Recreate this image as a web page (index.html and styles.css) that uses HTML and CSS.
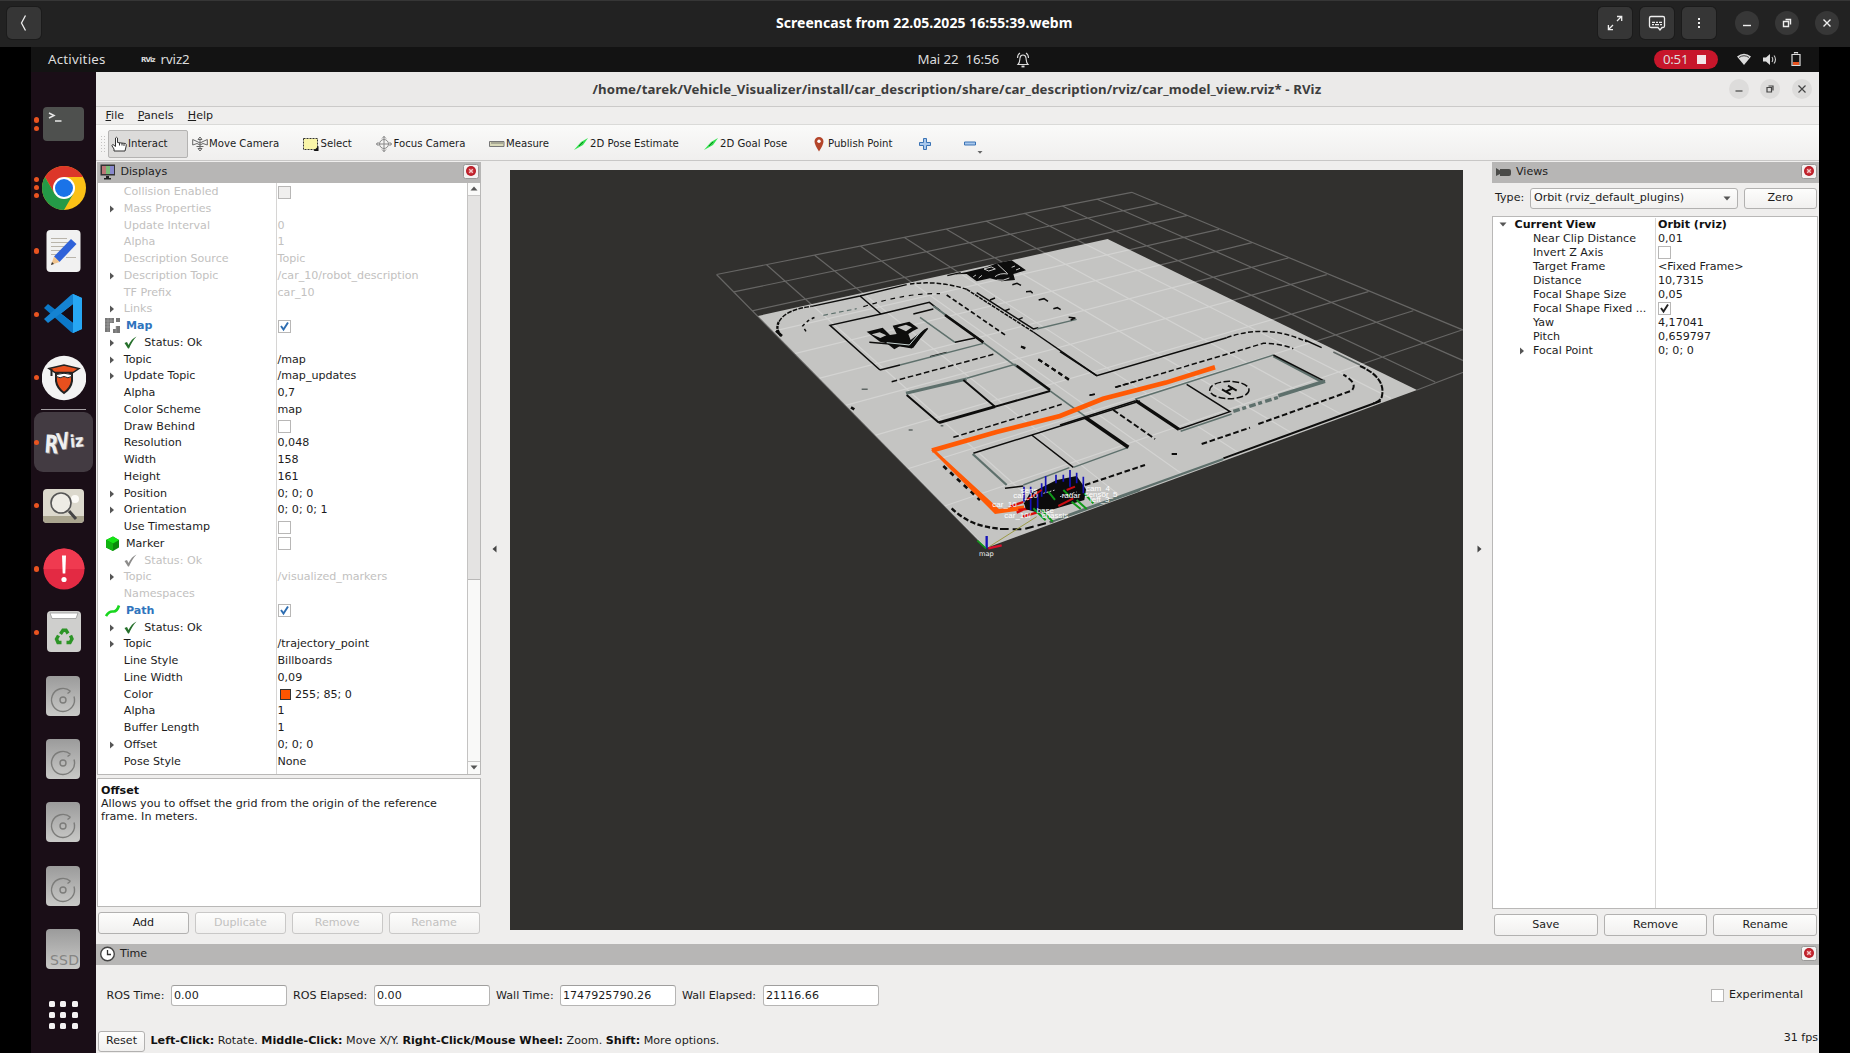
FILE: index.html
```html
<!DOCTYPE html>
<html lang="en">
<head>
<meta charset="utf-8">
<title>Screencast from 22.05.2025 16:55:39.webm</title>
<link rel="stylesheet" href="styles.css">
</head>
<body>
<svg class="defs" width="0" height="0">
  <defs>
    <linearGradient id="gDisk" x1="0" y1="0" x2="0" y2="1"><stop offset="0" stop-color="#9b9b9b"/><stop offset="1" stop-color="#c9c9c7"/></linearGradient>
    <radialGradient id="gRed"><stop offset="0" stop-color="#e04a50"/><stop offset="1" stop-color="#b3141f"/></radialGradient>
    <symbol id="arrow" viewBox="0 0 6 8"><path d="M1 0.5L5 4L1 7.5Z" fill="#555"/></symbol>
    <symbol id="down" viewBox="0 0 8 5"><path d="M0.5 0.5H7.5L4 4.5Z" fill="#555"/></symbol>
    <symbol id="tick" viewBox="0 0 13 13"><path d="M.5 7L3 6L4.500 9C6.500 5 9 2 12.500 0.5C9 4 7 8 5 12.500H4Z" fill="currentColor"/></symbol>
    <symbol id="check" viewBox="0 0 11 11"><path d="M2 5L4.500 8.500L9 1.500" fill="none" stroke="currentColor" stroke-width="1.9"/></symbol>
    <symbol id="close" viewBox="0 0 16 15"><rect x=".5" y=".5" width="15" height="14" rx="2" fill="#f4f3f2" stroke="#9a9998"/><circle cx="8" cy="7" r="5" fill="url(#gRed)"/><path d="M6.200 5.200l3.600 3.600M9.800 5.200L6.200 8.800" stroke="#f4c8c8" stroke-width="1.3"/></symbol>
    <symbol id="disk" viewBox="0 0 36 42"><rect x="1" y="1" width="34" height="40" rx="4" fill="url(#gDisk)"/><path d="M25.500 16.200A11.500 11.500 0 1 0 29 21.500M25.500 16.200L22.500 18.500" fill="none" stroke="#7c7c7a" stroke-width="1.4"/><circle cx="18" cy="25" r="3" fill="none" stroke="#7c7c7a" stroke-width="1.4"/></symbol>
    <symbol id="pose" viewBox="0 0 16 14"><path d="M1 13L8 5L15 1L10 8Z" fill="#2fe04b"/><path d="M6 9L10 5" stroke="#137a20"/></symbol>
  </defs>
</svg>
<div class="player">
  <header class="player-bar">
    <button class="pbtn"><svg width="34" height="32"><path d="M18.500 8.500L14.500 16L18.500 23.500" fill="none" stroke="#eee" stroke-width="1.3"/></svg></button>
    <h1 class="player-title">Screencast from 22.05.2025 16:55:39.webm</h1>
    <div class="player-actions">
      <button class="pbtn"><svg width="34" height="32" fill="none" stroke="#eee" stroke-width="1.3"><path d="M19 14L23.500 9.500M19 9.500H23.700V14M15 18L10.500 22.500M10.400 18V22.700H15"/></svg></button>
      <button class="pbtn"><svg width="34" height="32" fill="none" stroke="#eee" stroke-width="1.3"><path d="M11 9.500H23Q24.500 9.500 24.500 11V19Q24.500 20.500 23 20.500H22L20 23L18 20.500H11Q9.500 20.500 9.500 19V11Q9.500 9.500 11 9.500Z"/><path d="M12 15.300H15M16 15.300H18M19 15.300H22M12 17.700H14M15 17.700H19M20 17.700H22"/></svg></button>
      <button class="pbtn"><svg width="34" height="32" fill="#eee"><path d="M16 11h2v2h-2zM16 15h2v2h-2zM16 19h2v2h-2z"/></svg></button>
    </div>
    <div class="player-window">
      <svg width="24" height="24"><circle cx="12" cy="12" r="12"/><path d="M8 14.500H16"/></svg>
      <svg width="24" height="24"><circle cx="12" cy="12" r="12"/><path d="M8.500 10.500h5v5h-5zM10.500 8.500h5v5"/></svg>
      <svg width="24" height="24"><circle cx="12" cy="12" r="12"/><path d="M8.500 8.500l7 7M15.500 8.500l-7 7"/></svg>
    </div>
  </header>

  <div class="desktop">
    <div class="topbar">
      <div class="top-left"><span class="activities">Activities</span><b class="mini">RViz</b><span class="appname">rviz2</span></div>
      <div class="top-mid"><span class="clock">Mai 22&nbsp; 16:56</span>
        <svg width="14" height="16" fill="none" stroke="#ddd" stroke-width="1.1"><path d="M2 12.500C4 10.500 3.700 8 4 6Q4.300 3 7 3Q9.700 3 10 6C10.300 8 10 10.500 12 12.500ZM1.500 6Q1.500 2.500 4 1M12.500 6Q12.500 2.500 10 1"/><path d="M5.500 14.500h3" stroke-width="1.800"/></svg></div>
      <div class="top-right">
        <span class="rec">0:51<i></i></span>
        <svg class="wifi" width="14" height="13"><path d="M0 3.500Q7 -2 14 3.500L7 12Z" fill="#ddd"/><path d="M2 4.500Q7 1 12 4.500" fill="none" stroke="#131313" stroke-width=".8"/></svg>
        <svg class="vol" width="14" height="13"><path d="M0 4.500H3L7 1V12L3 8.500H0Z" fill="#ddd"/><path d="M9 4Q10.500 6.500 9 9M11 2.500Q14 6.500 11 10.500" fill="none" stroke="#ccc" stroke-width="1.1"/></svg>
        <svg width="10" height="15"><path d="M1 2.500H9V13.500H1ZM3.500 1.500V.700H6.500V1.500" fill="none" stroke="#ddd" stroke-width="1.2"/><path d="M2 10h6v3H2z" fill="#e95420"/></svg>
      </div>
    </div>

    <div class="workspace">
      <nav class="launcher">
        <div class="slot"><span class="dots"><i></i><i></i></span><svg width="42" height="46"><rect x="1" y="6" width="41" height="34" rx="4" fill="#4e504e"/><path d="M7 12l5 2.500-5 2.500M13 20h6.500" fill="none" stroke="#e8e8e8" stroke-width="1.500"/></svg></div>
        <div class="slot"><span class="dots"><i></i><i></i><i></i></span><svg width="44" height="46" viewBox="-22 -23 44 46"><circle r="22" fill="#fbc116"/><path d="M0 0L-19.050 -11A22 22 0 0 1 19.050 -11H0Z" fill="#dc3629"/><path d="M-19 -11L-9.500 5.500L0 0L0 -11Z" fill="#dc3629"/><path d="M-19.050 -11A22 22 0 0 0 0 22L9.500 5.500H0L-9.500 5.500Z" fill="#249a47"/><circle r="11" fill="#fff"/><circle r="9" fill="#1a73e8"/></svg></div>
        <div class="slot"><span class="dots"><i></i></span><svg width="44" height="46"><rect x="4.500" y="2" width="34" height="42" rx="4" fill="#f1f1f1"/><path d="M9 10.500H25M9 14.500H26M9 18.500H22M9 22.500H20M9 26.500H17M24 29.500H34" stroke="#b9b4aa"/><path d="M29 11L34.500 16L17.500 34L12 28.500Z" fill="#2f62d9"/><path d="M12 28.500L17.500 34L9 37Z" fill="#f0c48e"/><path d="M9 37l1-3 2 2z" fill="#333"/></svg></div>
        <div class="slot"><span class="dots"><i></i></span><svg width="44" height="46"><path d="M31 3L40 7V38L31 42L12 23Z" fill="#1f9cf0"/><path d="M31 13V32L19 22.500Z" fill="#170b14"/><path d="M2 17L6 13L31 32V42L29 41Z" fill="#0b78c8"/><path d="M2 28L6 32L31 13V3L29 4Z" fill="#1583d2"/><path d="M31 3L40 7V38L31 42Z" fill="#27a7f4"/></svg></div>
        <div class="slot"><span class="dots"><i></i></span><svg width="44" height="46"><circle cx="22" cy="23" r="22.300" fill="#f3f3f3"/><path d="M14 18V26Q15 33 22 38Q29 33 30 26V18Z" fill="#e8501e" stroke="#222" stroke-width="2"/><path d="M7 13.500L22 10L37 13.500L31 17.500H13Z" fill="#e8501e" stroke="#222" stroke-width="1.500"/><path d="M14.500 19.500Q22 17 29.500 19.500V21.500Q26 24 22 21.500Q18 24 14.500 21.500Z" fill="#fff" stroke="#222"/><path d="M9.500 14V21" stroke="#222" stroke-width="2"/></svg></div>
        <hr>
        <div class="slot active"><span class="dots"><i></i></span><svg width="44" height="46"><g font-family="DejaVu Sans" font-weight="bold"><g fill="#8d888c"><text transform="translate(3 34.500) rotate(4) scale(.72 1)" font-size="25">R</text><text transform="translate(17 31.500) rotate(-8) scale(.7 1)" font-size="23">V</text><text transform="translate(29.500 29) rotate(-5) scale(.86 1)" font-size="17">iz</text></g><g fill="#efefef"><text transform="translate(2 33.500) rotate(4) scale(.72 1)" font-size="25">R</text><text transform="translate(16 31) rotate(-8) scale(.7 1)" font-size="23">V</text><text transform="translate(28.500 28.500) rotate(-5) scale(.86 1)" font-size="17">iz</text></g></g></svg></div>
        <div class="slot"><span class="dots"><i></i></span><svg width="44" height="46"><rect x="1" y="6" width="41" height="34" rx="4" fill="#dcd9cd"/><path d="M1 33H42V36Q42 40 38 40H5Q1 40 1 36Z" fill="#aaa58f"/><circle cx="33" cy="16" r="4" fill="#fbfaf6"/><circle cx="19" cy="20" r="10" fill="#eeece5" stroke="#555" stroke-width="1.600"/><path d="M27 28L34 36" stroke="#444" stroke-width="3"/></svg></div>
        <div class="slot"><span class="dots"><i></i></span><svg width="44" height="46"><circle cx="22" cy="23" r="20.500" fill="#e32a43"/><path d="M1.500 23a20.500 20.500 0 0 1 41 0z" fill="#f03a50"/><path d="M20 9.500h4l-.7 18h-2.600z" fill="#fff"/><circle cx="22" cy="33.500" r="2.600" fill="#fff"/></svg></div>
        <div class="slot"><span class="dots"><i></i></span><svg width="44" height="46"><rect x="5" y="2" width="34" height="41" rx="4" fill="#cfcfcd"/><path d="M8 4H36L34 9.500H10Z" fill="#fff" stroke="#999" stroke-width=".800"/><g fill="none" stroke="#2c9426" stroke-width="3.400"><path d="M18.500 25L21 21.200H24L26 24.500M28.500 26.500L30 30L28 33.500H24.500M19.500 33.500H16L14.500 30L16.500 26.500"/></g></svg></div>
        <div class="slot"><svg class="disk" width="36" height="42"><use href="#disk"/></svg></div>
        <div class="slot"><svg class="disk" width="36" height="42"><use href="#disk"/></svg></div>
        <div class="slot"><svg class="disk" width="36" height="42"><use href="#disk"/></svg></div>
        <div class="slot"><svg class="disk" width="36" height="42"><use href="#disk"/></svg></div>
        <div class="slot"><svg class="disk" width="36" height="42"><rect x="1" y="1" width="34" height="40" rx="4" fill="url(#gDisk)"/><text x="5" y="37" font-family="DejaVu Sans" font-size="14" fill="#858583" textLength="29">SSD</text></svg></div>
        <div class="apps"><i></i><i></i><i></i><i></i><i></i><i></i><i></i><i></i><i></i></div>
      </nav>

      <main class="rviz">
        <div class="titlebar">
          <span class="wtitle">/home/tarek/Vehicle_Visualizer/install/car_description/share/car_description/rviz/car_model_view.rviz* - RViz</span>
          <div class="wbtns">
            <svg width="20" height="20"><circle cx="10" cy="10" r="10"/><path d="M6.500 12H13.500"/></svg>
            <svg width="20" height="20"><circle cx="10" cy="10" r="10"/><path d="M7 8.500h4.500v4.500H7zM8.500 7h4.500v4.500"/></svg>
            <svg width="20" height="20"><circle cx="10" cy="10" r="10"/><path d="M6.500 6.500l7 7M13.500 6.500l-7 7"/></svg>
          </div>
        </div>
        <div class="menubar"><span class="m1"><u>F</u>ile</span><span class="m2"><u>P</u>anels</span><span><u>H</u>elp</span></div>
        <div class="toolbar">
          <svg class="grip" width="4" height="16"><path d="M.500 0V16M3.500 0V16" stroke="#c4c3c2" stroke-dasharray="1 2"/></svg>
          <div class="tool on t1"><svg width="16" height="16"><path d="M3 15V13L.8 9.500L2 8.500L4.500 10.500V2Q5.500 .500 6.500 2V6.500L14.500 7.500Q15.500 8 15.200 10L14 15Z" fill="#fff" stroke="#333"/><path d="M8.500 7v2.500M11 7v2.500M13 8v2" stroke="#333"/></svg>Interact</div>
          <div class="tool t2"><svg width="16" height="16" fill="none" stroke="#666"><path d="M8 1L10 3.500H6ZM8 15L10 12.500H6ZM.700 3.500L5 5.500L8 7L11 5.500L15.300 3.500V9L11 7.500L8 9L5 7.500L.700 9ZM8 3.500V12.500M4.500 10.500h7"/></svg>Move Camera</div>
          <div class="tool t3"><svg width="16" height="16"><path d="M.500 2.500h14v11H.500z" fill="#f9f5a8" stroke="#333" stroke-dasharray="2 1"/><path d="M15.500 10v5h-5z" fill="#111"/></svg>Select</div>
          <div class="tool t4"><svg width="16" height="16" fill="none" stroke="#888"><circle cx="8" cy="8" r="4.500"/><path d="M8 0v16M0 8h16M6 2.500L8 .500l2 2M6 13.500l2 2 2-2M2.500 6L.500 8l2 2M13.500 6l2 2-2 2"/></svg>Focus Camera</div>
          <div class="tool t5"><svg width="16" height="16"><path d="M.500 5.500h14.500v5H.500z" fill="#d8d8b8" stroke="#777"/><path d="M3 6v2M5 6v2M7 6v2M9 6v2M11 6v2M13 6v2" stroke="#555" stroke-width=".700"/></svg>Measure</div>
          <div class="tool t6"><svg width="16" height="14"><use href="#pose"/></svg>2D Pose Estimate</div>
          <div class="tool t7"><svg width="16" height="14"><use href="#pose"/></svg>2D Goal Pose</div>
          <div class="tool t8"><svg width="16" height="16"><path d="M8 15.500Q3.500 8.500 3.500 5.500A4.500 4.500 0 0 1 12.500 5.500Q12.500 8.500 8 15.500Z" fill="#b4452a"/><circle cx="8" cy="5.300" r="1.700" fill="#fff"/></svg>Publish Point</div>
          <svg class="plus" width="12" height="12"><path d="M4.500 .500h3v4h4v3h-4v4h-3v-4h-4v-3h4z" fill="#a9c8ec" stroke="#3a73b5"/></svg>
          <svg class="minus" width="20" height="20"><path d="M.500 8h11v3H.500z" fill="#a9c8ec" stroke="#3a73b5"/><path d="M13.500 17h5l-2.500 2.800z" fill="#666"/></svg>
        </div>

        <div class="middle">
          <section class="displays">
            <div class="dockhead"><svg width="16" height="16"><path d="M.500 .500h14.500v11H.500z" fill="#333"/><path d="M2 2h4v8H2z" fill="#b77"/><path d="M6 2h4v8H6z" fill="#7b7"/><path d="M10 2h4v8h-4z" fill="#88c"/><path d="M6 12h3v2h2v1.500H4V14h2z" fill="#222"/></svg><span>Displays</span><svg class="x" width="16" height="15"><use href="#close"/></svg></div>
            <div class="treebox">
              <div class="tree">
                <div class="row off"><div class="n">Collision Enabled</div><div class="v"><i class="cb dis"></i></div></div>
                <div class="row off"><div class="n"><svg class="ar"><use href="#arrow"/></svg>Mass Properties</div><div class="v"></div></div>
                <div class="row off"><div class="n">Update Interval</div><div class="v">0</div></div>
                <div class="row off"><div class="n">Alpha</div><div class="v">1</div></div>
                <div class="row off"><div class="n">Description Source</div><div class="v">Topic</div></div>
                <div class="row off"><div class="n"><svg class="ar"><use href="#arrow"/></svg>Description Topic</div><div class="v">/car_10/robot_description</div></div>
                <div class="row off"><div class="n">TF Prefix</div><div class="v">car_10</div></div>
                <div class="row off"><div class="n"><svg class="ar"><use href="#arrow"/></svg>Links</div><div class="v"></div></div>
                <div class="row"><div class="n disp"><svg width="16" height="16"><path d="M0 0h9v5H5v9H0z" fill="#777"/><path d="M11 0h4v4h-4zM8 11h3v-3h4v7H8z" fill="#777"/><path d="M0 3h9M0 6h5M0 9h5M3 0v14M6 0v5M11 8v7" stroke="#aaa" stroke-width=".600"/></svg><b>Map</b></div><div class="v"><i class="cb blue"><svg width="11" height="11"><use href="#check"/></svg></i></div></div>
                <div class="row"><div class="n"><svg class="ar"><use href="#arrow"/></svg><svg class="ok"><use href="#tick"/></svg>Status: Ok</div><div class="v"></div></div>
                <div class="row"><div class="n"><svg class="ar"><use href="#arrow"/></svg>Topic</div><div class="v">/map</div></div>
                <div class="row"><div class="n"><svg class="ar"><use href="#arrow"/></svg>Update Topic</div><div class="v">/map_updates</div></div>
                <div class="row"><div class="n">Alpha</div><div class="v">0,7</div></div>
                <div class="row"><div class="n">Color Scheme</div><div class="v">map</div></div>
                <div class="row"><div class="n">Draw Behind</div><div class="v"><i class="cb"></i></div></div>
                <div class="row"><div class="n">Resolution</div><div class="v">0,048</div></div>
                <div class="row"><div class="n">Width</div><div class="v">158</div></div>
                <div class="row"><div class="n">Height</div><div class="v">161</div></div>
                <div class="row"><div class="n"><svg class="ar"><use href="#arrow"/></svg>Position</div><div class="v">0; 0; 0</div></div>
                <div class="row"><div class="n"><svg class="ar"><use href="#arrow"/></svg>Orientation</div><div class="v">0; 0; 0; 1</div></div>
                <div class="row"><div class="n">Use Timestamp</div><div class="v"><i class="cb"></i></div></div>
                <div class="row"><div class="n disp"><svg width="16" height="16"><path d="M1 4L8 .500L14 4V11.500L8 15L1 11.500Z" fill="#0a8a0a"/><path d="M1 4L8 .500L14 4L8 7.500Z" fill="#15e515"/><path d="M1 4L8 7.500V15L1 11.500Z" fill="#10b410"/></svg><span>Marker</span></div><div class="v"><i class="cb"></i></div></div>
                <div class="row off"><div class="n"><svg class="ok"><use href="#tick"/></svg>Status: Ok</div><div class="v"></div></div>
                <div class="row off"><div class="n"><svg class="ar"><use href="#arrow"/></svg>Topic</div><div class="v">/visualized_markers</div></div>
                <div class="row off"><div class="n">Namespaces</div><div class="v"></div></div>
                <div class="row"><div class="n disp"><svg width="16" height="16"><path d="M1 13Q4 8 8 8.500T14 2.500" fill="none" stroke="#19d61f" stroke-width="2.600"/></svg><b>Path</b></div><div class="v"><i class="cb blue"><svg width="11" height="11"><use href="#check"/></svg></i></div></div>
                <div class="row"><div class="n"><svg class="ar"><use href="#arrow"/></svg><svg class="ok"><use href="#tick"/></svg>Status: Ok</div><div class="v"></div></div>
                <div class="row"><div class="n"><svg class="ar"><use href="#arrow"/></svg>Topic</div><div class="v">/trajectory_point</div></div>
                <div class="row"><div class="n">Line Style</div><div class="v">Billboards</div></div>
                <div class="row"><div class="n">Line Width</div><div class="v">0,09</div></div>
                <div class="row"><div class="n">Color</div><div class="v"><i class="swatch"></i>255; 85; 0</div></div>
                <div class="row"><div class="n">Alpha</div><div class="v">1</div></div>
                <div class="row"><div class="n">Buffer Length</div><div class="v">1</div></div>
                <div class="row"><div class="n"><svg class="ar"><use href="#arrow"/></svg>Offset</div><div class="v">0; 0; 0</div></div>
                <div class="row"><div class="n">Pose Style</div><div class="v">None</div></div>
              </div>
              <div class="scroll"><div class="sb up"><svg width="8" height="5"><use href="#down"/></svg></div><div class="trough"></div><div class="thumb"></div><div class="sb"><svg width="8" height="5"><use href="#down"/></svg></div></div>
            </div>
            <div class="help"><b>Offset</b><br>Allows you to offset the grid from the origin of the reference<br>frame. In meters.</div>
            <div class="btnrow"><button class="qb">Add</button><button class="qb" disabled>Duplicate</button><button class="qb" disabled>Remove</button><button class="qb" disabled>Rename</button></div>
          </section>

          <div class="split"><svg width="5" height="8"><path d="M4.500 .500V7.500L.500 4Z" fill="#444"/></svg></div>

          <svg class="view" width="953" height="760" viewBox="510 170 953 760">
            <rect x="510" y="170" width="953" height="760" fill="#31302e"/>
            <path d="M986 548L1417 390L1107.600 239L758 316Z" fill="#c4c4c2"/>
            <path fill="none" stroke="#fff" stroke-opacity=".26" stroke-width="1.200" d="M986 548L716.500 274.500M1056.700 521.900L766.600 264.700M1122.400 497.600L814.300 255M1183.600 475L860.300 246M1240.600 453.900L904 237.300M1294 434.200L946 229M1344 415.700L986 221M1391 398.400L1024.300 213.300M1435.200 382L1061.700 205.700M1476.800 366.600L1096.700 199M1516 352L1131.700 192.300M1417 390L1516 352M944.600 506L1462.600 329.800M907.800 468.700L1413.300 310.700M875 435.300L1368.300 291.700M845.500 405.400L1326.700 274.700M818.800 378.300L1288.300 258M794.600 353.700L1252 242.700M772.500 331.300L1219 229.300M752.300 310.800L1186.700 215.700M733.700 291.900L1158.300 203.300M716.500 274.500L1131.700 192.300"/>

            <g transform="translate(700 180) scale(.33333)" fill="none" stroke="#0d0d0c" stroke-width="4.500">
              <path d="M243 468Q225 445 237 425" stroke-width="7" stroke-dasharray="9 3"/>
              <path d="M237 425C250 400 285 385 335 379" stroke-dasharray="14 4"/>
              <path d="M335 379L480 348L620 314" stroke-width="4"/>
              <path d="M630 312C680 305 740 308 800 328" stroke-dasharray="14 6"/>
              <path d="M480 348L543 402M543 402L390 436L540 570M543 402L688 367L720 392"/>
              <path d="M540 570L600 555M690 530L740 517" stroke-width="4"/>
              <path d="M600 555L850 490" stroke="#5e706c" stroke-width="4"/>
              <path d="M700 378L850 487" stroke="#5e706c" stroke-width="6"/>
              <path d="M735 405L850 487" stroke-width="8"/>
              <path d="M640 402L700 387M765 487L825 474"/>
              <path d="M660 412L765 487" stroke="#5e706c"/>
              <path d="M318 454L308 438Q325 418 350 410" stroke-dasharray="9 9"/>
              <path d="M370 406L470 386" stroke="#5e706c" stroke-dasharray="14 10" stroke-width="3.500"/>
              <path d="M490 380Q620 338 720 341" stroke-dasharray="14 14" stroke-width="3.500"/>
              <path d="M740 345L920 468" stroke-dasharray="14 8" stroke-width="5"/>
              <path d="M963 499l12 7M1015 538L1110 602" stroke-dasharray="14 10" stroke-width="6"/>
              <path d="M800 328L1000 456" stroke-dasharray="12 3"/>
              <path d="M1000 456L1190 587"/>
              <path d="M830 338L1000 447l15-4M870 360l15-6M915 392l14-5M955 418l13-5"/>
              <path d="M1010 447L1130 418" stroke="#5e706c" stroke-width="4"/>
              <path d="M937 314l14-4 12 6M978 335l14-1 6 6M1016 360l16-4 12 8M1060 386l12-3 10 6M1106 412l20 2-14 6"/>
              <path d="M742 287l40-9" stroke-width="4"/>
              <path d="M765 283L800 276L860 262L890 250L935 241L978 271L940 282L945 300L905 304L870 295L830 304L800 282Z" fill="#0d0d0c" stroke="none"/>
              <path d="M852 267l22-6 12 6-20 6zM885 290q15-12 38-8M890 300q20 4 38-6M820 290l8-5M836 294l10-8M893 253l30 28M935 262l10-4M948 270l12-5" stroke="#c9c9c7" stroke-width="3"/>
              <path d="M500 455L548 443L570 465L590 462L578 437L628 425L655 445L640 452L625 462L632 480L675 447L682 445L640 503L600 498L583 508L560 490L540 485Z" fill="#0d0d0c" stroke="none"/>
              <path d="M515 463l24-6 20 9-18 8zM592 442l26-8 18 8-18 12z" fill="#c4c4c2" stroke="none"/>
              <path d="M508 487L570 492L635 503L683 445"/>
              <path d="M560 488L628 495L665 452" stroke="#c9d6d4" stroke-width="3"/>
            </g>

            <g transform="translate(740 330) scale(.33333)" fill="none" stroke="#0d0d0c" stroke-width="4.500">
              <path d="M730 38L1040 262" stroke="#5e706c" stroke-width="5"/>
              <path d="M108 2l18 16M333 232l10 6" stroke-width="8"/>
              <path d="M365 178h18M506 300h12M602 287h8" stroke="#5f6664"/>
              <path d="M455 155L760 73M640 322L965 223" stroke-dasharray="17 8"/>
              <path d="M498 190L680 147" stroke="#5e706c" stroke-width="9"/>
              <path d="M680 145L825 103L930 180" stroke="#5e706c"/>
              <path d="M500 195L597 278M670 150L765 230L930 183" stroke-width="6"/>
              <path d="M597 278L765 230" stroke-width="9"/>
              <path d="M830 107L930 180" stroke-width="7"/>
              <path d="M844 50l12 4M895 88L990 150" stroke-width="6" stroke-dasharray="14 10"/>
              <path d="M1048 196l16-3M1128 172L1200 150" stroke-dasharray="16 8"/>
              <path d="M700 370L1200 213M875 315L1000 412"/>
              <path d="M698 372L800 465" stroke="#5e706c" stroke-width="7"/>
              <path d="M795 475L850 468"/>
              <path d="M850 465L988 413" stroke="#5e706c"/>
              <path d="M1000 412L1165 352" stroke="#5e706c"/>
              <path d="M610 408L720 510" stroke-dasharray="14 14" stroke-width="8"/>
              <path d="M635 535Q690 590 780 596" stroke-width="7" stroke-dasharray="16 7"/>
              <path d="M780 597L850 598L940 574" stroke-width="6" stroke-dasharray="26 12"/>
              <path d="M930 577L1200 480" stroke="#5e706c" stroke-width="6"/>
            </g>

            <g transform="translate(1060 340) scale(.33333)" fill="none" stroke="#0d0d0c" stroke-width="4.500">
              <path d="M0 35L110 107L500 -7"/>
              <path d="M500 -7Q620 -50 740 5" stroke-dasharray="15 7"/>
              <path d="M735 0L785 23"/>
              <path d="M90 165l15-2M165 142L610 10Q660 10 700 26" stroke-dasharray="16 8"/>
              <path d="M820 36L900 75" stroke="#5f6664"/>
              <path d="M900 78C955 102 975 135 965 172Q958 185 940 190" stroke-dasharray="18 4" stroke-width="6"/>
              <path d="M962 183L490 355" stroke-width="6"/>
              <path d="M490 357L0 534" stroke="#5e706c" stroke-width="7"/>
              <path d="M225 178L640 45" stroke="#5e706c"/>
              <path d="M640 49L790 128" stroke="#5e706c" stroke-width="7"/>
              <path d="M640 45L795 124"/>
              <path d="M655 167L795 124" stroke="#5e706c" stroke-width="11"/>
              <path d="M520 214L655 172" stroke="#5e706c" stroke-width="10" stroke-dasharray="20 8 12 10"/>
              <ellipse cx="508" cy="150" rx="59" ry="26" stroke-dasharray="20 7"/>
              <path d="M486 148L512 163M504 137L530 152M497 155L520 144" stroke-width="6"/>
              <path d="M380 133L510 215L357 268"/>
              <path d="M362 274L515 222" stroke="#5e706c"/>
              <path d="M227 182L357 268" stroke-width="10"/>
              <path d="M75 232L205 322" stroke-width="11"/>
              <path d="M0 255L227 182"/>
              <path d="M160 210L285 297M75 435L255 375M425 312L570 263" stroke-width="6" stroke-dasharray="17 8"/>
              <path d="M335 342h16" stroke-width="6"/>
              <path d="M595 252L875 152Q895 130 850 104" stroke-width="6" stroke-dasharray="17 8"/>
            </g>

            <path d="M1215 367.300L1166 382.600L1103 398.800L1060 416L996.600 432L932 450.500" fill="none" stroke="#ff5a05" stroke-width="4.600"/>
            <path d="M931 450L935 450L999 509L1024 505.500V510L995 514Z" fill="#ff5a05"/>

            <g transform="translate(740 330) scale(.33333)" fill="none" stroke-width="5">
              <path d="M748 650L890 560" stroke="#9b9a45" stroke-width="3"/>
              <path d="M810 530L850 516M830 548L880 525M848 560L890 548M835 540l40-5" stroke="#d60b0b" stroke-width="7"/>
              <path d="M852 520L870 490L950 450L1010 438L1038 478L1033 510L900 550L858 538Z" fill="#0b0b0c"/>
              <path d="M852 470V515M872 470V540M893 490V545M917 438V490M948 434V460M970 434V455M990 420V470M1010 428V460M1030 440V490M905 460V500" stroke="#1512b8"/>
              <path d="M860 510L905 480M955 528L1000 505M980 480L1005 470" stroke="#c80c12" stroke-width="6"/>
              <path d="M880 535L917 571M905 540L938 575M925 485L945 510M995 515L1022 537M1010 510L1040 537M1033 490L1060 520M970 480l20 20" stroke="#11991a" stroke-width="6"/>
              <path d="M910 490l35-10M960 500l50-14" stroke="#ccc" stroke-width="3" stroke-dasharray="5 5"/>
              <g fill="#fff" font-family="Liberation Sans" font-size="24">
                <text x="820" y="504">car_10</text><text x="842" y="488">sens</text><text x="757" y="530">car_10</text><text x="793" y="564">car_10/</text><text x="905" y="564">chassis</text><text x="890" y="548">base</text><text x="965" y="504">radar</text><text x="1038" y="482">cam_4</text><text x="1034" y="500">sensor_5</text><text x="1050" y="516">left_3</text>
              </g>
              <path d="M740 655V618" stroke="#1512b8" stroke-width="7"/><path d="M738 655L712 632" stroke="#11991a"/><path d="M745 655L785 646" stroke="#d9102c" stroke-width="7"/>
              <text x="717" y="677" fill="#f4f4f4" font-family="DejaVu Sans" font-size="20">map</text>
            </g>
          </svg>

          <div class="split right"><svg width="5" height="8"><path d="M.500 .500V7.500L4.500 4Z" fill="#444"/></svg></div>

          <section class="views">
            <div class="dockhead"><svg width="16" height="16"><path d="M0 4l4 2.500V5h9q2 0 2 2v3q0 2-2 2H4v-2L0 12z" fill="#4a4a48"/></svg><span>Views</span><svg class="x" width="16" height="15"><use href="#close"/></svg></div>
            <div class="typerow"><label>Type:</label><div class="combo">Orbit (rviz_default_plugins)<svg width="8" height="5"><use href="#down"/></svg></div><button class="qb zero">Zero</button></div>
            <div class="vtree">
              <div class="vr head"><div class="n"><svg width="8" height="5"><use href="#down"/></svg>Current View</div><div class="v">Orbit (rviz)</div></div>
              <div class="vr"><div class="n">Near Clip Distance</div><div class="v">0,01</div></div>
              <div class="vr"><div class="n">Invert Z Axis</div><div class="v"><i class="cb"></i></div></div>
              <div class="vr"><div class="n">Target Frame</div><div class="v">&lt;Fixed Frame&gt;</div></div>
              <div class="vr"><div class="n">Distance</div><div class="v">10,7315</div></div>
              <div class="vr"><div class="n">Focal Shape Size</div><div class="v">0,05</div></div>
              <div class="vr"><div class="n">Focal Shape Fixed ...</div><div class="v"><i class="cb"><svg width="11" height="11"><use href="#check"/></svg></i></div></div>
              <div class="vr"><div class="n">Yaw</div><div class="v">4,17041</div></div>
              <div class="vr"><div class="n">Pitch</div><div class="v">0,659797</div></div>
              <div class="vr"><div class="n"><svg class="ar"><use href="#arrow"/></svg>Focal Point</div><div class="v">0; 0; 0</div></div>
              <div class="vfill"><div class="n"></div></div>
            </div>
            <div class="btnrow"><button class="qb">Save</button><button class="qb">Remove</button><button class="qb">Rename</button></div>
          </section>
        </div>

        <section class="time">
          <div class="dockhead"><svg width="16" height="16"><circle cx="7.500" cy="8" r="6.800" fill="#fff" stroke="#444" stroke-width="1.400"/><path d="M7.500 4V8.500H11" fill="none" stroke="#333" stroke-width="1.300"/></svg><span>Time</span><svg class="x" width="16" height="15"><use href="#close"/></svg></div>
          <div class="fields">
            <label class="l1">ROS Time:</label><div class="inp">0.00</div>
            <label class="l2">ROS Elapsed:</label><div class="inp">0.00</div>
            <label class="l3">Wall Time:</label><div class="inp">1747925790.26</div>
            <label class="l4">Wall Elapsed:</label><div class="inp">21116.66</div>
            <span class="exp"><i class="cb"></i>Experimental</span>
          </div>
        </section>
        <div class="status"><button class="qb reset">Reset</button><p><b>Left-Click:</b> Rotate. <b>Middle-Click:</b> Move X/Y. <b>Right-Click/Mouse Wheel:</b> Zoom. <b>Shift:</b> More options.</p><span class="fps">31 fps</span></div>
      </main>
    </div>
  </div>
</div>
</body>
</html>
```
FILE: styles.css
```css
* { box-sizing: border-box; }
body { margin: 0; background: #000; overflow: hidden; font: 11.1px/14px "DejaVu Sans", sans-serif; color: #1c1c1c; }
button { font: inherit; padding: 0; margin: 0; color: inherit; }
svg { display: block; flex: none; }
.defs { position: absolute; }
.player { width: 1850px; height: 1053px; display: flex; flex-direction: column; }

/* video player header */
.player-bar { height: 47px; flex: none; display: grid; grid-template-columns: 34px 1fr 118px 134px; align-items: start; padding: 6px 0 0 7px; background: #222; border-top: 1px solid #363636; }
.pbtn { width: 34px; height: 32px; border: 0; border-radius: 5px; background: #363636; box-shadow: 0 0 0 1px #1b1b1b; }
.player-title { margin: 0; padding-left: 735px; font: bold 14px/32px "Noto Sans", sans-serif; color: #fff; white-space: nowrap; letter-spacing: .04px; }
.player-actions { display: flex; gap: 8px; }
.player-window { display: flex; gap: 16px; padding: 4px 0 0 19px; }
.player-window circle { fill: #373737; }
.player-window path { fill: none; stroke: #eee; stroke-width: 1.4; }

.desktop { margin: 0 31px; height: 1006px; display: flex; flex-direction: column; }
.topbar { height: 25px; flex: none; background: #131313; color: #ddd; font: 13.3px/25px "Noto Sans", sans-serif; display: flex; }
.top-left { width: 886.500px; display: flex; align-items: center; padding-left: 17px; }
.activities { width: 93px; letter-spacing: .22px; }
.mini { font: bold 7px/10px "DejaVu Sans"; width: 19.500px; letter-spacing: -.9px; }
.appname { letter-spacing: -.1px; }
.top-mid { width: 736.500px; display: flex; align-items: center; gap: 17px; }
.clock { width: 81px; white-space: nowrap; letter-spacing: -.08px; }
.top-right { display: flex; align-items: center; }
.rec { width: 63.500px; height: 19px; border-radius: 10px; background: #c7162b; line-height: 19px; padding: 0 12px 0 9px; display: flex; align-items: center; justify-content: space-between; letter-spacing: -.3px; }
.rec i { width: 9px; height: 9px; background: #f3e6e8; }
.wifi { margin-left: 19px; }
.vol { margin: 0 14px 0 12px; }

.workspace { flex: 1; display: flex; min-height: 0; }
.launcher { width: 65px; flex: none; background: #1a0e17; padding-top: 20.500px; }
.slot { height: 63.350px; display: flex; align-items: center; padding-left: 10.500px; position: relative; }
.slot .disk { margin-left: 3.500px; }
.dots { position: absolute; left: 3px; top: 0; height: 100%; display: flex; flex-direction: column; gap: 3px; justify-content: center; }
.dots i { width: 5.300px; height: 5.300px; border-radius: 50%; background: #e95420; }
.launcher hr { width: 45px; height: 1px; border: 0; background: #a5a0a4; margin: 0 0 2px 10px; }
.slot.active { background: #433b42; border-radius: 9px; margin: 1.700px 3px 1.700px 3px; height: 60px; padding-left: 8px; }
.slot.active .dots { left: 0; }
.apps { display: grid; grid-template-columns: repeat(3, 6px); gap: 5.300px; margin: 20px 0 0 18px; }
.apps i { height: 6px; border-radius: 1.500px; background: #f4f2f3; }

/* rviz window */
.rviz { flex: 1; min-width: 0; background: #efeeed; display: flex; flex-direction: column; }
.titlebar { height: 35px; flex: none; background: #ebeae9; border-bottom: 1px solid #cbcac9; display: flex; justify-content: space-between; align-items: center; padding: 0 7px 0 496.500px; }
.wtitle { font: bold 13.200px/34px "Noto Sans", sans-serif; letter-spacing: .115px; color: #3d3d3d; white-space: nowrap; }
.wbtns { display: flex; gap: 11.600px; }
.wbtns circle { fill: #dddcdb; }
.wbtns path { fill: none; stroke: #444; stroke-width: 1.200; }
.menubar { height: 18px; flex: none; border-bottom: 1px solid #dadad8; padding-left: 9.500px; display: flex; line-height: 17px; }
.m1 { width: 32.300px; }
.m2 { width: 50px; }
.toolbar { height: 36px; flex: none; background: linear-gradient(#fafaf9, #f0efee); border-bottom: 1px solid #c8c7c6; display: flex; align-items: center; padding: 2px 0 0 4.500px; font-size: 10.150px; }
.grip { margin-right: 3px; }
.tool { display: flex; align-items: center; gap: 1.500px; padding-left: 3px; height: 28px; white-space: nowrap; flex: none; }
.tool.on { background: #dcdbda; border: 1px solid #b4b3b2; border-radius: 2px; padding-left: 2px; }
.t1 { width: 80px; margin-right: 1px; }
.t2 { width: 111.500px; } .t3 { width: 73px; } .t4 { width: 112.500px; } .t5 { width: 84px; } .t6 { width: 130px; } .t7 { width: 108px; } .t8 { width: 109.500px; }
.plus { margin-left: 2px; }
.minus { margin-left: 33px; }

.middle { flex: 1; min-height: 0; display: flex; padding-top: 1px; }
.dockhead { height: 20.500px; flex: none; background: #b7b6b5; display: flex; align-items: center; padding: 0 2px 0 3.500px; gap: 4.500px; }
.dockhead .x { margin: -2px 0 0 auto; }
.displays { width: 384.500px; flex: none; padding-left: .500px; display: flex; flex-direction: column; }
.treebox { height: 592px; flex: none; border: 1px solid #b9b8b7; border-top: 0; background: #fff; display: flex; }
.tree { flex: 1; display: flex; flex-direction: column; background: linear-gradient(#d6d5d4, #d6d5d4) 178px 0 / 1px 100% no-repeat; padding-top: 1.300px; }
.row { height: 16.760px; display: flex; align-items: center; white-space: nowrap; }
.row.off { color: #c2c1c0; }
.row .n { width: 180px; padding-left: 26.300px; display: flex; align-items: center; }
.row .n.disp { padding-left: 7px; gap: 5.500px; }
.n b { color: #2f74bd; }
.row .v, .vr .v { display: flex; align-items: center; }
.ar { width: 6px; height: 8px; margin: 0 8.500px 0 -14.500px; }
.ok { width: 13px; height: 13px; margin-right: 7.500px; color: #26702b; }
.off .ok { color: #8d8c8b; }
.cb { width: 13px; height: 13px; border: 1px solid #b8b7b6; background: #fff; display: block; flex: none; color: #222; }
.cb.dis { background: #f0efee; }
.cb.blue { color: #2d6db1; }
.swatch { width: 11.500px; height: 11.500px; background: #ff5500; border: 1px solid #333; margin: 0 4px 0 2px; }
.scroll { width: 13px; border-left: 1px solid #c4c3c2; display: flex; flex-direction: column; background: #fafaf9; }
.sb { height: 13px; display: flex; align-items: center; justify-content: center; border-top: 1px solid #c9c8c7; }
.sb.up { border-top: 0; border-bottom: 1px solid #c9c8c7; }
.up svg { transform: rotate(180deg); }
.trough { height: 384px; background: #e4e3e2; border-bottom: 1px solid #b9b8b7; }
.thumb { flex: 1; background: #f9f9f8; }
.help { margin-top: 3.500px; height: 128.500px; flex: none; border: 1px solid #b9b8b7; background: #fff; padding: 4.500px 3.500px; line-height: 13px; white-space: nowrap; font-size: 11.150px; }
.help b, .status b, .vr.head { color: #111; font-weight: bold; }
.btnrow { display: flex; gap: 6px; padding: 5.500px 1px 0 1.500px; }
.qb { flex: 1; height: 21.500px; border: 1px solid #b2b1b0; border-radius: 3px; background: linear-gradient(#fdfdfc, #f1f0ef); }
.qb:disabled { color: #c2c1c0; border-color: #c9c8c7; }
.split { width: 29.500px; flex: none; display: flex; align-items: center; padding: 0 0 8px 11px; }
.split.right { width: 29px; padding-left: 14px; }
.view { margin-top: 8px; }

.views { flex: 1; display: flex; flex-direction: column; min-width: 0; }
.typerow { display: flex; padding: 5px 2px 7px 3px; align-items: center; }
.typerow label { width: 34.500px; }
.combo { width: 208px; height: 21.500px; border: 1px solid #b2b1b0; border-radius: 3px; background: linear-gradient(#fdfdfc, #f1f0ef); display: flex; align-items: center; justify-content: space-between; padding: 0 6px 0 3.500px; white-space: nowrap; }
.zero { margin-left: 6px; }
.vtree { height: 692.500px; border: 1px solid #b9b8b7; background: #fff; padding-top: 1px; display: flex; flex-direction: column; margin-right: 1px; }
.vr { height: 13.980px; display: flex; align-items: center; white-space: nowrap; line-height: 13px; }
.vr .n, .vfill .n { width: 162.500px; padding-left: 40px; border-right: 1px solid #d6d5d4; height: 100%; display: flex; align-items: center; flex: none; }
.vr.head .n { padding-left: 6px; gap: 7.500px; }
.vr .v { padding-left: 2.500px; }
.vfill { flex: 1; }
.views .btnrow { padding-left: 2px; padding-right: 2px; }

.time { height: 87px; flex: none; }
.fields { display: flex; align-items: center; padding: 20px 0 0 10.500px; }
.fields label { padding-top: 1px; }
.l1 { width: 64.500px; } .l2 { width: 87px; padding-left: 6px; } .l3 { width: 70px; padding-left: 6px; } .l4 { width: 87px; padding-left: 6px; }
.inp { width: 116px; height: 21.500px; border: 1px solid #b6b5b4; border-top-color: #9f9e9d; border-radius: 3px; background: #fff; padding: 3px 2px; }
.exp { margin-left: auto; margin-right: 16px; display: flex; align-items: center; gap: 5px; }
.status { display: flex; height: 22px; padding-left: 2px; }
.reset { flex: none; width: 47px; height: 20.500px; }
.status p { margin: 2.500px 0 0 5.500px; font-size: 11.150px; }
.fps { margin: 0 1px 0 auto; }
```
